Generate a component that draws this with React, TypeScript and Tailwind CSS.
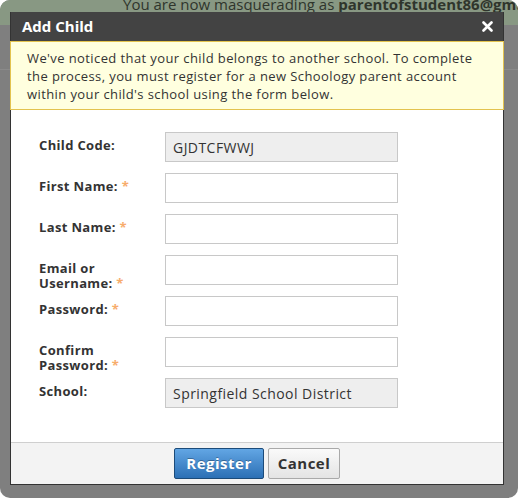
import React from "react";

type Field = {
  label: React.ReactNode;
  value?: string;
  required?: boolean;
  readOnly?: boolean;
  type?: string;
};

const fields: Field[] = [
  { label: "Child Code:", value: "GJDTCFWWJ", readOnly: true },
  { label: "First Name:", required: true },
  { label: "Last Name:", required: true },
  {
    label: (
      <>
        Email or
        <br />
        Username:
      </>
    ),
    required: true,
  },
  { label: "Password:", required: true, type: "password" },
  {
    label: (
      <>
        Confirm
        <br />
        Password:
      </>
    ),
    required: true,
    type: "password",
  },
  { label: "School:", value: "Springfield School District", readOnly: true },
];

function FormRow({ field }: { field: Field }) {
  return (
    <div className="flex h-[30px] items-start">
      <label className="w-[126px] shrink-0 pt-[6px] text-[13px] leading-[15px] font-bold tracking-[0.35px] text-[#333]">
        {field.label}
        {field.required && <span className="text-[#f7ac6c]"> *</span>}
      </label>
      <input
        type={field.type ?? "text"}
        readOnly={field.readOnly}
        defaultValue={field.value}
        className={`h-[30px] w-[233px] border border-[#c8c8c8] px-[7px] text-[14px] tracking-[0.45px] text-[#333] outline-none ${
          field.readOnly ? "bg-[#eeeeee]" : "bg-white"
        }`}
      />
    </div>
  );
}

export default function App() {
  return (
    <div className="h-[498px] w-[518px] bg-white font-['Open_Sans',sans-serif]">
      <div className="relative h-[498px] w-[518px] overflow-hidden rounded-[10px] bg-[#7f7f7f]">
        {/* page behind the overlay */}
        <div className="h-[29px] bg-[#889883] pl-[123px]">
          <div className="-mt-[4px] text-[15px] leading-[16px] whitespace-nowrap text-[#2f352c]">
            You are now masquerading as <b>parentofstudent86@gmail.com</b>
          </div>
        </div>
        <div className="h-[45px] border-b border-[#8a8a8a]" />

        {/* modal */}
        <div className="absolute top-[12px] left-[10px] flex w-[494px] flex-col border-x border-b border-[#333] bg-white">
          <div className="flex h-[29px] items-center justify-between bg-[#434343] pr-[10px] pl-[11px]">
            <span className="text-[15px] font-bold text-white">Add Child</span>
            <svg width="11" height="11" viewBox="0 0 11 11">
              <path d="M1.5 1.5 L9.5 9.5 M9.5 1.5 L1.5 9.5" stroke="#fff" strokeWidth="2.6" strokeLinecap="round" />
            </svg>
          </div>

          <div className="-mx-px border border-[#e3c34f] bg-[#ffffdf] pt-[7px] pr-[10px] pb-[6px] pl-[16px] text-[13px] leading-[18px] tracking-[0.4px] whitespace-nowrap text-[#333]">
            We've noticed that your child belongs to another school. To complete
            <br />
            the process, you must register for a new Schoology parent account
            <br />
            within your child's school using the form below.
          </div>

          <form className="flex flex-col gap-[11px] pt-[22px] pb-[34px] pl-[28px]">
            {fields.map((f, i) => (
              <FormRow key={i} field={f} />
            ))}
          </form>

          <div className="flex justify-center gap-[4px] border-t border-[#cfcfcf] bg-[#f3f3f3] py-[5px]">
            <button className="h-[31px] w-[90px] rounded-[2px] border border-[#1c4b79] bg-gradient-to-b from-[#62a6e4] to-[#2c70b5] text-[15px] font-bold tracking-[0.5px] text-white [text-shadow:0_-1px_0_rgba(0,0,0,0.3)]">
              Register
            </button>
            <button className="h-[31px] w-[72px] rounded-[2px] border border-[#a9a9a9] bg-gradient-to-b from-[#fafafa] to-[#e4e4e4] text-[15px] font-bold tracking-[0.5px] text-[#333]">
              Cancel
            </button>
          </div>
        </div>
      </div>
    </div>
  );
}
